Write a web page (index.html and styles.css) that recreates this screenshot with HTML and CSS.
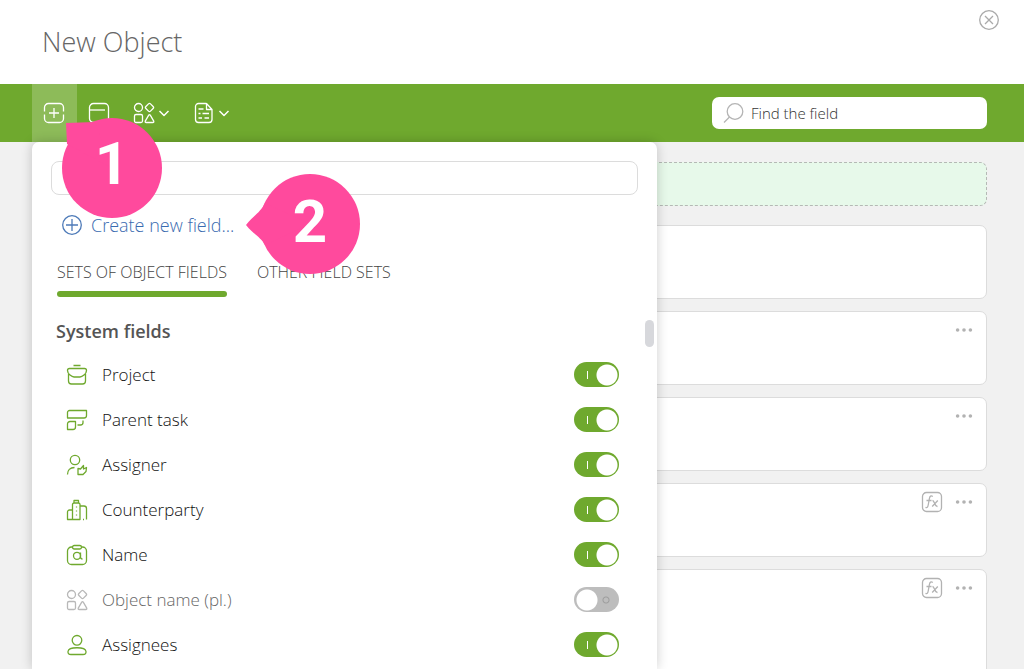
FILE: index.html
```html
<!DOCTYPE html>
<html lang="en">
<head>
<meta charset="utf-8">
<title>New Object</title>
<link rel="stylesheet" href="styles.css">
</head>
<body>
<svg class="sprite" aria-hidden="true">
  <symbol id="shapes" viewBox="0 0 22 22"><circle cx="5.5" cy="5.5" r="4"/><path d="M15.5 1.9Q16.5.9 17.5 1.9L20.1 4.5Q21.1 5.5 20.1 6.500L17.500 9.100Q16.500 10.100 15.500 9.100L12.900 6.500Q11.900 5.500 12.900 4.500Z"/><rect x="1.500" y="12.500" width="8" height="8" rx="1.500"/><path d="M15.600 13.300Q16.500 11.800 17.400 13.300L20.600 18.800Q21.300 20.500 19.700 20.500H13.300Q11.700 20.500 12.400 18.800Z"/></symbol>
  <symbol id="chevron" viewBox="0 0 12 12"><path d="M1.500 4 6 8.500 10.500 4"/></symbol>
  <symbol id="dots" viewBox="0 0 18 6"><circle cx="2.600" cy="3" r="1.800"/><circle cx="9" cy="3" r="1.800"/><circle cx="15.400" cy="3" r="1.800"/></symbol>
  <symbol id="fx" viewBox="0 0 22 22"><rect x="1.500" y="1.500" width="19" height="19" rx="4"/><path d="M11.800 5.500C10 4.200 8.800 5.200 8.400 7.500L7.200 14C6.800 16.500 6 17 4.500 16.300M5.500 9.500H10.500M11.500 9.500C13.500 9.500 13.500 15.500 16.500 15.500M16.800 9.500 11.200 15.500"/></symbol>
</svg>

<header class="header">
  <h1 class="title">New Object</h1>
  <button class="close" aria-label="Close"><svg class="icon" viewBox="0 0 22 22"><circle cx="11" cy="11" r="9.300"/><path d="m7 7 8 8m0-8-8 8"/></svg></button>
</header>

<div class="toolbar">
  <div class="tools">
    <button class="tool tool-active" aria-label="Add field"><svg class="icon" viewBox="0 0 22 22"><path d="M1.500 9.500V5.500a4 4 0 0 1 4-4h11a4 4 0 0 1 4 4v4M1.500 12.500v4a4 4 0 0 0 4 4h11a4 4 0 0 0 4-4v-4M11 6v10M6 11h10"/></svg></button>
    <button class="tool" aria-label="Add section"><svg class="icon" viewBox="0 0 22 22"><rect x="1.500" y="1.500" width="19" height="19" rx="4"/><path d="M1.500 8H17"/></svg></button>
    <button class="tool tool-menu" aria-label="Object type"><svg class="icon"><use href="#shapes"/></svg><svg class="chevron"><use href="#chevron"/></svg></button>
    <button class="tool tool-menu" aria-label="Templates"><svg class="icon" viewBox="0 0 22 22"><path d="M13 1.500H5.500a3 3 0 0 0-3 3v13a3 3 0 0 0 3 3h10.500a3 3 0 0 0 3-3V7.500L13.500 1.500V7.500H19M5.500 7h5M5.500 11.500h2M9.500 11.500H16M5.500 16H9M11.500 16H16"/></svg><svg class="chevron"><use href="#chevron"/></svg></button>
  </div>
  <label class="search">
    <svg class="icon" viewBox="0 0 22 22"><circle cx="13" cy="9.500" r="7.800"/><path d="m7.500 15-5.500 5.500"/></svg>
    <input class="search-input" type="text" placeholder="Find the field" aria-label="Find the field">
  </label>
</div>

<main class="workspace">
  <div class="cards">
    <section class="dropzone"></section>
    <section class="card"></section>
    <section class="card"><button class="more" aria-label="More"><svg class="dots"><use href="#dots"/></svg></button></section>
    <section class="card"><button class="more" aria-label="More"><svg class="dots"><use href="#dots"/></svg></button></section>
    <section class="card"><button class="more" aria-label="Formula"><svg class="icon"><use href="#fx"/></svg></button><button class="more" aria-label="More"><svg class="dots"><use href="#dots"/></svg></button></section>
    <section class="card card-tall"><button class="more" aria-label="Formula"><svg class="icon"><use href="#fx"/></svg></button><button class="more" aria-label="More"><svg class="dots"><use href="#dots"/></svg></button></section>
  </div>

  <div class="popover">
    <input class="filter" type="text" aria-label="Filter fields">
    <button class="create"><svg class="icon" viewBox="0 0 22 22"><circle cx="11" cy="11" r="9.300"/><path d="M11 5v12M5 11h12"/></svg>Create new field...</button>
    <div class="tabs" role="tablist">
      <button class="tab tab-active" role="tab" aria-selected="true">SETS OF OBJECT FIELDS</button>
      <button class="tab" role="tab" aria-selected="false">OTHER FIELD SETS</button>
    </div>
    <h2 class="group">System fields</h2>
    <div class="fields">
      <label class="field"><svg class="icon" viewBox="0 0 22 22"><path d="M7.500 1.500h7M2.500 10v7a3 3 0 0 0 3 3h11a3 3 0 0 0 3-3v-7M3.500 4.500h15q2 0 2 2C20.500 10 16 13 14 13H8C6 13 1.500 10 1.500 6.500q0-2 2-2Z"/></svg><span class="name">Project</span><input class="switch" type="checkbox" checked></label>
      <label class="field"><svg class="icon" viewBox="0 0 22 22"><path d="M3.500 1.500h17v5a2.500 2.500 0 0 1-2.500 2.500H1.500V3.500a2 2 0 0 1 2-2ZM4 12.500h5.500v5.500a2.500 2.500 0 0 1-2.500 2.500H1.500V15A2.500 2.500 0 0 1 4 12.500ZM17 11.500v2a2.500 2.500 0 0 1-2.500 2.500H11.500"/></svg><span class="name">Parent task</span><input class="switch" type="checkbox" checked></label>
      <label class="field"><svg class="icon" viewBox="0 0 22 22"><circle cx="9" cy="6" r="4.700"/><path d="M1.500 20.500C1.500 16.500 4 13.500 8.500 13.500M12 14.500 14.500 15 17.500 11.500V15L20.500 13.500 20 17.500 17 20.500H12Z"/></svg><span class="name">Assigner</span><input class="switch" type="checkbox" checked></label>
      <label class="field"><svg class="icon" viewBox="0 0 22 22"><path d="M1.500 20.500V13a2 2 0 0 1 2-2h3v9.500ZM6.500 11V5.500a1.500 1.500 0 0 1 1.500-1.500h4.500A1.500 1.500 0 0 1 14 5.500v15H6.500M8 4V1.500h4.500V4M14 7h4a2.500 2.500 0 0 1 2.500 2.500v11M17 20.500h1M10.500 7.500v1M10.500 11.500v1M10.500 15.500v1"/></svg><span class="name">Counterparty</span><input class="switch" type="checkbox" checked></label>
      <label class="field"><svg class="icon" viewBox="0 0 22 22"><path d="M6.500 3H5.500a4 4 0 0 0-4 4v9.500a4 4 0 0 0 4 4h11a4 4 0 0 0 4-4V7a4 4 0 0 0-4-4h-1M14.500 8.500V13q0 2 2 2"/><rect x="6.500" y="1.500" width="9" height="3.500" rx="1.700"/><circle cx="11" cy="11.800" r="3.500"/></svg><span class="name">Name</span><input class="switch" type="checkbox" checked></label>
      <label class="field field-off"><svg class="icon"><use href="#shapes"/></svg><span class="name">Object name (pl.)</span><input class="switch" type="checkbox"></label>
      <label class="field"><svg class="icon" viewBox="0 0 22 22"><circle cx="11" cy="6.300" r="4.800"/><path d="M2 17.500C2.500 12.500 19.500 12.500 20 17.500Q20.300 20.500 17 20.500H5Q1.700 20.500 2 17.500Z"/></svg><span class="name">Assignees</span><input class="switch" type="checkbox" checked></label>
    </div>
    <div class="thumb"></div>
    <div class="marker marker-one"><svg class="pin" viewBox="0 0 100 102"><circle cx="50" cy="52" r="50"/><path d="M4 7 33 6 50 52 5 28Z"/></svg><span class="digit">1</span></div>
    <div class="marker marker-two"><svg class="pin" viewBox="0 0 114 100"><circle cx="64" cy="50" r="50"/><path d="M0 51C8 41 14 39 19 29L64 50 19 71C14 62 8 61 0 51Z"/></svg><span class="digit">2</span></div>
  </div>
</main>
</body>
</html>
```
FILE: styles.css
```css
* { box-sizing: border-box; }
body {
  margin: 0;
  height: 100vh;
  display: flex;
  flex-direction: column;
  overflow: hidden;
  background: #f1f1f1;
  color: #444;
  font-family: "Open Sans", "Noto Sans", sans-serif;
  font-weight: 300;
}
button {
  margin: 0;
  padding: 0;
  border: 0;
  background: none;
  color: inherit;
  font: inherit;
  cursor: pointer;
}
svg { display: block; flex: none; fill: none; stroke: currentColor; stroke-width: 1.3; stroke-linejoin: round; }
.sprite { position: absolute; width: 0; height: 0; }
.icon { width: 22px; height: 22px; }
.chevron { width: 12px; height: 12px; stroke-width: 1.5; }

.header {
  flex: none;
  display: flex;
  justify-content: space-between;
  align-items: flex-start;
  height: 84px;
  padding: 9px 24px 0 42px;
  background: #fff;
}
.title { margin: 14px 0 0; font-size: 27px; line-height: 38px; font-weight: 350; color: #666; }
.close { color: #aaa; }

.toolbar {
  flex: none;
  display: flex;
  justify-content: space-between;
  align-items: center;
  height: 58px;
  padding: 0 37px 0 32px;
  background: #6fa92e;
  color: #fff;
}
.tools { display: flex; align-self: stretch; }
.tool { display: flex; align-items: center; padding-left: 11px; width: 45px; }
.tool-active { background: #8dbb59; }
.tool-menu { width: 60px; gap: 3px; }
.search {
  display: flex;
  align-items: center;
  gap: 7px;
  width: 275px;
  height: 32px;
  padding: 0 11px 0 10px;
  border-radius: 7px;
  background: #fff;
  color: #b4b4b4;
}
.search-input {
  flex: 1;
  min-width: 0;
  border: 0;
  padding: 0;
  outline: 0;
  background: none;
  color: #444;
  font: 300 15px "Open Sans", "Noto Sans", sans-serif;
}
.search-input::placeholder { color: #333; opacity: 1; }

.workspace { position: relative; flex: 1; min-height: 0; }
.cards { display: flex; flex-direction: column; gap: 12px; height: 100%; padding: 20px 37px 0; overflow: hidden; }
.dropzone { flex: none; height: 44px; margin-bottom: 7px; border: 1px dashed #b5b9b5; border-radius: 7px; background: #e7f9ea; }
.card {
  flex: none;
  display: flex;
  justify-content: flex-end;
  align-items: flex-start;
  gap: 12px;
  height: 74px;
  padding: 7px 13px;
  border: 1px solid #dcdcdc;
  border-radius: 7px;
  background: #fff;
}
.card-tall { height: 120px; }
.more { display: flex; align-items: center; height: 22px; color: #b2b2b2; }
.dots { width: 18px; height: 6px; fill: currentColor; stroke: none; }

.popover {
  position: absolute;
  z-index: 1;
  top: 0;
  bottom: 0;
  left: 32px;
  width: 625px;
  padding: 19px 19px 0;
  border-radius: 7px 7px 0 0;
  background: #fff;
  box-shadow: 0 0 12px rgba(0, 0, 0, .2);
}
.filter { display: block; width: 100%; height: 34px; padding: 0 10px; border: 1px solid #dcdcdc; border-radius: 8px; background: #fff; outline: 0; font: inherit; }
.create { display: flex; align-items: center; gap: 8px; height: 30px; margin: 15px 0 0 10px; color: #3a6bb0; font-size: 18px; font-weight: 350; }
.create .icon { color: #4d7ab8; }
.tabs { display: flex; align-items: flex-start; gap: 30px; height: 37px; margin: 20px 0 0 6px; }
.tab { color: #444; font-size: 16px; line-height: 24px; }
.tab-active::after { content: ""; display: block; height: 6px; margin-top: 7px; border-radius: 3px; background: #6fa92e; }
.group { margin: 21px 0 8px 5px; color: #555; font-size: 18px; line-height: 26px; font-weight: 650; }
.field { display: flex; align-items: center; gap: 14px; height: 45px; padding: 0 19px 0 15px; color: #6fa92e; }
.name { flex: 1; color: #111; font-size: 17px; line-height: 24px; font-weight: 320; }
.field-off { color: #b8b8b8; }
.field-off .name { color: #666; }
.switch {
  appearance: none;
  flex: none;
  width: 45px;
  height: 25px;
  margin: 0;
  border-radius: 13px;
  background: radial-gradient(circle at 13px 13px, #fff 10px, transparent 11px), radial-gradient(circle at 32px 13px, transparent 2px, #9d9d9d 3px, transparent 4px), #bdbdbd;
}
.switch:checked { background: radial-gradient(circle at 33px 13px, #fff 10px, transparent 11px), linear-gradient(#fff, #fff) 13px 9px / 1px 8px no-repeat, #6fa92e; }
.thumb { position: absolute; top: 178px; right: 3px; width: 9px; height: 27px; border-radius: 5px; background: #d7d8dc; }

.marker { position: absolute; display: flex; justify-content: flex-end; }
.marker-one { top: -26px; left: 30px; width: 100px; height: 102px; }
.marker-two { top: 32px; left: 214px; width: 114px; height: 100px; }
.pin { position: absolute; inset: 0; width: 100%; height: 100%; fill: #ff4a9d; stroke: none; }
.digit { position: relative; width: 100px; color: #fff; text-align: center; font-family: Roboto, sans-serif; font-size: 60px; line-height: 96px; font-weight: 700; }
```
